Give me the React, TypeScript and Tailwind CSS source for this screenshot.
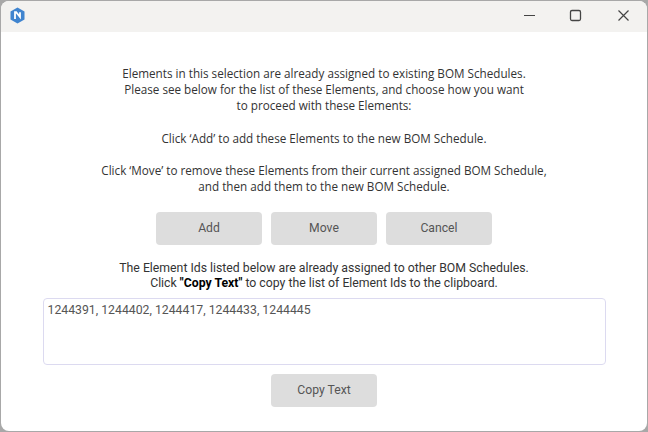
export default function App() {
  const btn = "w-[106px] h-[33px] rounded-[4px] bg-[#dddddd] text-[#555555] text-[12.2px] flex items-center justify-center";
  return (
    <div className="w-[648px] h-[432px] bg-[#a8a8a8] overflow-hidden px-px pt-px pb-px" style={{ fontFamily: "Roboto, sans-serif" }}>
      <div className="w-full h-full bg-white rounded-[8px] overflow-hidden flex flex-col">
        <div className="h-[31px] bg-[#f3f2f0] flex items-center justify-between shrink-0">
          <svg className="ml-[8px] mb-[2px]" width="17" height="17" viewBox="0 0 17 17">
            <polygon points="8.5,0.5 15.5,4.5 15.5,12.5 8.5,16.5 1.5,12.5 1.5,4.5" fill="#3f84cf" />
            <path d="M6 12V5.2h1.2L11 10V5.2" fill="none" stroke="#fff" strokeWidth="1.8" />
          </svg>
          <div className="flex items-center">
            <svg width="46" height="31" viewBox="0 0 46 31"><path d="M17 14.5h11" stroke="#444" strokeWidth="1.2" /></svg>
            <svg width="48" height="31" viewBox="0 0 48 31"><rect x="17.5" y="9.5" width="10" height="10" rx="1.5" fill="none" stroke="#444" strokeWidth="1.3" /></svg>
            <svg width="46" height="31" viewBox="0 0 46 31"><path d="M17.5 9.5l10 10m0-10l-10 10" stroke="#444" strokeWidth="1.2" /></svg>
          </div>
        </div>
        <div className="flex-1 flex flex-col items-center pt-[33px]">
          <div className="text-center text-[11.7px] leading-[16px] text-[#333333]" style={{ fontFamily: '"Open Sans", sans-serif' }}>
            <p>Elements in this selection are already assigned to existing BOM Schedules.</p>
            <p>Please see below for the list of these Elements, and choose how you want</p>
            <p>to proceed with these Elements:</p>
            <p className="mt-[17px]">Click ‘Add’ to add these Elements to the new BOM Schedule.</p>
            <p className="mt-[16px]">Click ‘Move’ to remove these Elements from their current assigned BOM Schedule,</p>
            <p>and then add them to the new BOM Schedule.</p>
          </div>
          <div className="flex gap-[9px] mt-[18px]">
            <button className={btn}>Add</button>
            <button className={btn}>Move</button>
            <button className={btn}>Cancel</button>
          </div>
          <div className="text-center text-[12.27px] leading-[15px] text-[#333333] mt-[16px]">
            <p>The Element Ids listed below are already assigned to other BOM Schedules.</p>
            <p>Click <b className="text-black">"Copy Text"</b> to copy the list of Element Ids to the clipboard.</p>
          </div>
          <div className="w-[563px] h-[67px] mt-[7px] border border-[#dcdaf0] rounded-[4px] px-[4px] py-[2px] text-[12.27px] leading-[18px] text-[#555555]">
            1244391, 1244402, 1244417, 1244433, 1244445
          </div>
          <button className={btn + " mt-[9px]"}>Copy Text</button>
        </div>
      </div>
    </div>
  );
}
